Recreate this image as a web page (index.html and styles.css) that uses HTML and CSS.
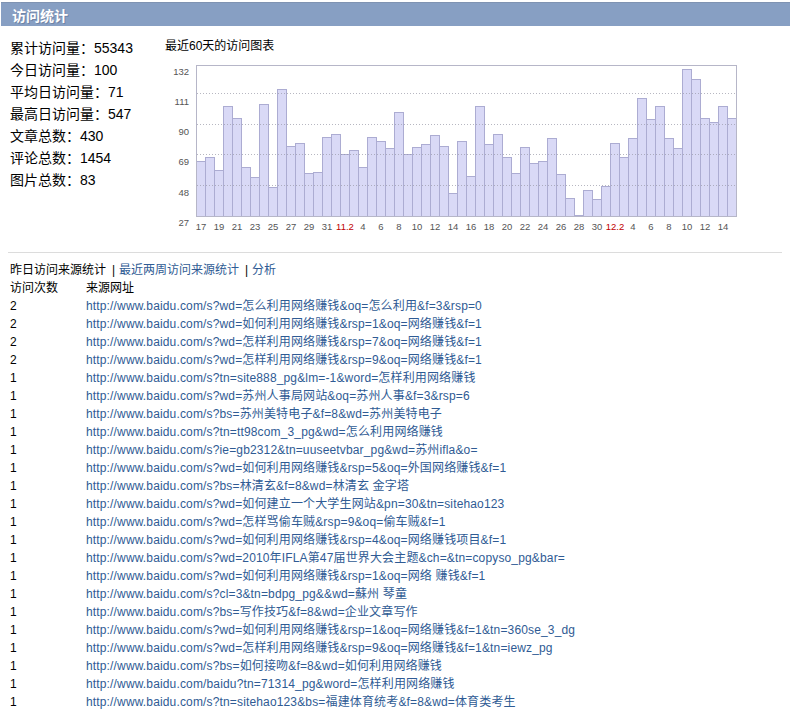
FILE: index.html
```html
<!DOCTYPE html>
<html>
<head>
<meta charset="utf-8">
<link rel="stylesheet" href="styles.css">
</head>
<body>
<div class="header"><span class="title">访问统计</span></div>
<div class="top">
  <div class="stats">
    <div class="stat">累计访问量：55343</div>
    <div class="stat">今日访问量：100</div>
    <div class="stat">平均日访问量：71</div>
    <div class="stat">最高日访问量：547</div>
    <div class="stat">文章总数：430</div>
    <div class="stat">评论总数：1454</div>
    <div class="stat">图片总数：83</div>
  </div>
  <div class="chart">
    <div class="chart-title">最近60天的访问图表</div>
    <svg id="chart" class="chart-svg" width="590" height="180" viewBox="160 55 590 180" xmlns="http://www.w3.org/2000/svg"></svg>
  </div>
</div>
<div class="sep"></div>
<div class="tabs">昨日访问来源统计<span class="pipe">|</span><a href="#">最近两周访问来源统计</a><span class="pipe">|</span><a href="#">分析</a></div>
<div class="list">
  <div class="row head"><span>访问次数</span><span>来源网址</span></div>
  <div class="row"><span>2</span><a href="#">http://www.baidu.com/s?wd=怎么利用网络赚钱&amp;oq=怎么利用&amp;f=3&amp;rsp=0</a></div>
  <div class="row"><span>2</span><a href="#">http://www.baidu.com/s?wd=如何利用网络赚钱&amp;rsp=1&amp;oq=网络赚钱&amp;f=1</a></div>
  <div class="row"><span>2</span><a href="#">http://www.baidu.com/s?wd=怎样利用网络赚钱&amp;rsp=7&amp;oq=网络赚钱&amp;f=1</a></div>
  <div class="row"><span>2</span><a href="#">http://www.baidu.com/s?wd=怎样利用网络赚钱&amp;rsp=9&amp;oq=网络赚钱&amp;f=1</a></div>
  <div class="row"><span>1</span><a href="#">http://www.baidu.com/s?tn=site888_pg&amp;lm=-1&amp;word=怎样利用网络赚钱</a></div>
  <div class="row"><span>1</span><a href="#">http://www.baidu.com/s?wd=苏州人事局网站&amp;oq=苏州人事&amp;f=3&amp;rsp=6</a></div>
  <div class="row"><span>1</span><a href="#">http://www.baidu.com/s?bs=苏州美特电子&amp;f=8&amp;wd=苏州美特电子</a></div>
  <div class="row"><span>1</span><a href="#">http://www.baidu.com/s?tn=tt98com_3_pg&amp;wd=怎么利用网络赚钱</a></div>
  <div class="row"><span>1</span><a href="#">http://www.baidu.com/s?ie=gb2312&amp;tn=uuseetvbar_pg&amp;wd=苏州ifla&amp;o=</a></div>
  <div class="row"><span>1</span><a href="#">http://www.baidu.com/s?wd=如何利用网络赚钱&amp;rsp=5&amp;oq=外国网络赚钱&amp;f=1</a></div>
  <div class="row"><span>1</span><a href="#">http://www.baidu.com/s?bs=林清玄&amp;f=8&amp;wd=林清玄 金字塔</a></div>
  <div class="row"><span>1</span><a href="#">http://www.baidu.com/s?wd=如何建立一个大学生网站&amp;pn=30&amp;tn=sitehao123</a></div>
  <div class="row"><span>1</span><a href="#">http://www.baidu.com/s?wd=怎样骂偷车贼&amp;rsp=9&amp;oq=偷车贼&amp;f=1</a></div>
  <div class="row"><span>1</span><a href="#">http://www.baidu.com/s?wd=如何利用网络赚钱&amp;rsp=4&amp;oq=网络赚钱项目&amp;f=1</a></div>
  <div class="row"><span>1</span><a href="#">http://www.baidu.com/s?wd=2010年IFLA第47届世界大会主题&amp;ch=&amp;tn=copyso_pg&amp;bar=</a></div>
  <div class="row"><span>1</span><a href="#">http://www.baidu.com/s?wd=如何利用网络赚钱&amp;rsp=1&amp;oq=网络 赚钱&amp;f=1</a></div>
  <div class="row"><span>1</span><a href="#">http://www.baidu.com/s?cl=3&amp;tn=bdpg_pg&amp;&amp;wd=蘇州 琴童</a></div>
  <div class="row"><span>1</span><a href="#">http://www.baidu.com/s?bs=写作技巧&amp;f=8&amp;wd=企业文章写作</a></div>
  <div class="row"><span>1</span><a href="#">http://www.baidu.com/s?wd=如何利用网络赚钱&amp;rsp=1&amp;oq=网络赚钱&amp;f=1&amp;tn=360se_3_dg</a></div>
  <div class="row"><span>1</span><a href="#">http://www.baidu.com/s?wd=怎样利用网络赚钱&amp;rsp=9&amp;oq=网络赚钱&amp;f=1&amp;tn=iewz_pg</a></div>
  <div class="row"><span>1</span><a href="#">http://www.baidu.com/s?bs=如何接吻&amp;f=8&amp;wd=如何利用网络赚钱</a></div>
  <div class="row"><span>1</span><a href="#">http://www.baidu.com/baidu?tn=71314_pg&amp;word=怎样利用网络赚钱</a></div>
  <div class="row"><span>1</span><a href="#">http://www.baidu.com/s?tn=sitehao123&amp;bs=福建体育统考&amp;f=8&amp;wd=体育类考生</a></div>
</div>
<script src="chart.js"></script>
</body>
</html>
```
FILE: chart.js
```js
(function () {
  var NS = "http://www.w3.org/2000/svg";
  var svg = document.getElementById("chart");
  var tops = [161,157,170,106,118,167,177,104,187,89,146,143,173,172,137,134,154,150,167,137,141,148,112,154,147,144,135,146,193,141,176,106,144,134,157,173,147,163,161,138,174,198,215,190,199,186,143,157,138,98,119,106,138,148,69,79,118,122,106,118];
  var labels = ["17","19","21","23","25","27","29","31","11.2","4","6","8","10","12","14","16","18","20","22","24","26","28","30","12.2","4","6","8","10","12","14"];
  var left = 196.5, bottom = 216.5, w = 9;
  function el(name, attrs, text) {
    var e = document.createElementNS(NS, name);
    for (var k in attrs) e.setAttribute(k, attrs[k]);
    if (text) e.textContent = text;
    svg.appendChild(e);
    return e;
  }
  el("rect", {x: left, y: 65.5, width: 540, height: 151, "class": "plot"});
  tops.forEach(function (t, i) {
    el("rect", {x: left + w * i, y: t + 0.5, width: w, height: bottom - t - 0.5, "class": "bar"});
  });
  [93.5, 124.5, 154.5, 185.5].forEach(function (y) {
    el("line", {x1: 197, x2: 736, y1: y, y2: y, "class": "grid"});
  });
  el("rect", {x: left, y: 65.5, width: 540, height: 151, "class": "frame"});
  var ys = [["132", 75], ["111", 105], ["90", 134.5], ["69", 165], ["48", 196], ["27", 226]];
  ys.forEach(function (p) {
    el("text", {x: 189, y: p[1], "class": "ylab"}, p[0]);
  });
  labels.forEach(function (l, k) {
    el("text", {x: 201 + 18 * k, y: 230, "class": (l.indexOf(".") > 0 ? "xlab red" : "xlab")}, l);
  });
})();
```
FILE: styles.css
```css
html, body {
  margin: 0;
  padding: 0;
  background: #fff;
}
body {
  font-family: "Liberation Sans", "Noto Sans CJK SC", sans-serif;
  font-size: 12px;
  color: #000;
  width: 790px;
}
a {
  color: #2f5b94;
  text-decoration: none;
}
.header {
  margin: 2px 0 0 1px;
  height: 23px;
  border-top: 1px solid #7f93b2;
  background: #879fc3;
  display: flex;
  align-items: center;
  padding-left: 11px;
}
.title {
  color: #fff;
  font-weight: bold;
  font-size: 14px;
  text-shadow: 1px 1px 0 #6f84a6;
}
.top {
  display: flex;
  padding-top: 11px;
}
.stats {
  width: 150px;
  padding-left: 10px;
}
.stat {
  font-size: 14px;
  line-height: 22px;
  height: 22px;
  white-space: nowrap;
}
.chart-title {
  padding-left: 5px;
  line-height: 18px;
  height: 18px;
}
.chart-svg {
  display: block;
}
.plot {
  fill: #fff;
  stroke: none;
}
.frame {
  fill: none;
  stroke: #b6b6c8;
  stroke-width: 1;
}
.bar {
  fill: #d9d9f6;
  stroke: #acacd2;
  stroke-width: 1;
}
.grid {
  stroke: #9a9aa8;
  stroke-width: 1;
  stroke-dasharray: 1 2;
  opacity: 0.7;
}
.ylab, .xlab {
  font-family: "Liberation Sans", sans-serif;
  font-size: 9.5px;
  fill: #555;
}
.ylab {
  text-anchor: end;
}
.xlab {
  text-anchor: middle;
}
.xlab.red {
  fill: #c00000;
}
.sep {
  margin: 17px 8px 0 8px;
  height: 0;
  border-top: 1px solid #dcdcdc;
}
.tabs {
  margin-top: 8px;
  padding-left: 10px;
  line-height: 18px;
  height: 18px;
  white-space: nowrap;
}
.pipe {
  display: inline-block;
  width: 9px;
  padding-right: 4px;
  text-align: right;
}
.list {
  padding-left: 10px;
}
.row {
  display: grid;
  grid-template-columns: 76px auto;
  line-height: 18px;
  height: 18px;
  white-space: nowrap;
}
.row a {
  letter-spacing: 0.15px;
}
```
